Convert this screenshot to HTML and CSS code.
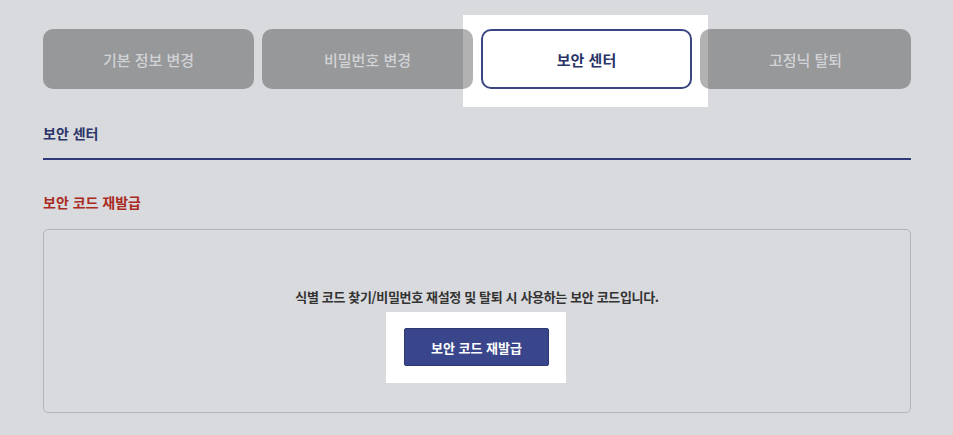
FILE: index.html
```html
<!DOCTYPE html>
<html lang="ko">
<head>
<meta charset="utf-8">
<link rel="stylesheet" href="styles.css">
</head>
<body>
<div class="page">
  <nav class="tabs">
    <a class="tab">기본 정보 변경</a>
    <a class="tab">비밀번호 변경</a>
    <a class="tab active">보안 센터</a>
    <a class="tab">고정닉 탈퇴</a>
  </nav>
  <h2 class="section-title">보안 센터</h2>
  <h3 class="sub-title">보안 코드 재발급</h3>
  <div class="box">
    <p class="desc">식별 코드 찾기/비밀번호 재설정 및 탈퇴 시 사용하는 보안 코드입니다.</p>
    <div class="btn-wrap"><button class="btn">보안 코드 재발급</button></div>
  </div>
</div>
</body>
</html>
```
FILE: styles.css
```css
html, body { margin: 0; padding: 0; }
body {
  background: #d9dadd;
  font-family: "Noto Sans CJK KR", "Noto Sans", sans-serif;
  width: 953px;
  height: 435px;
  overflow: hidden;
}
.page {
  margin-left: 43px;
  width: 868px;
  padding-top: 29px;
}
.tabs {
  display: grid;
  grid-template-columns: repeat(4, 1fr);
  gap: 8px;
  isolation: isolate;
}
.tab {
  height: 60px;
  border-radius: 10px;
  background: rgba(0, 0, 0, 0.3);
  color: #d2d3d6;
  font-size: 15px;
  font-weight: 500;
  display: flex;
  align-items: center;
  justify-content: center;
  box-sizing: border-box;
}
.tab.active {
  position: relative;
  background: #fff;
  border: 2px solid #3a4682;
  color: #2b3468;
  font-weight: 700;
}
.tab.active::before {
  content: "";
  position: absolute;
  left: -20px;
  right: -18px;
  top: -16px;
  bottom: -20px;
  background: #fff;
  z-index: -1;
}
.section-title {
  margin: 0;
  margin-top: 34px;
  font-size: 14px;
  font-weight: 700;
  color: #2b3468;
  line-height: 20px;
  padding-bottom: 15px;
  border-bottom: 2px solid #2f3a78;
}
.sub-title {
  margin: 0;
  margin-top: 32px;
  font-size: 14px;
  font-weight: 700;
  color: #a92a1f;
  line-height: 20px;
}
.box {
  margin-top: 17px;
  height: 184px;
  box-sizing: border-box;
  border: 1px solid #b3b4b8;
  border-radius: 5px;
  display: flex;
  flex-direction: column;
  align-items: center;
  padding-top: 57px;
}
.desc {
  margin: 0;
  font-size: 13px;
  font-weight: 700;
  letter-spacing: -0.35px;
  color: #333;
  line-height: 20px;
}
.btn-wrap {
  margin-top: 5px;
  background: #fff;
  padding: 16px 17px 17px 18px;
  margin-left: -2px;
}
.btn {
  display: block;
  width: 145px;
  height: 38px;
  background: #3a468c;
  border: 1px solid #2d3870;
  border-radius: 2px;
  color: #fff;
  font-family: inherit;
  font-size: 13px;
  font-weight: 700;
  padding: 0;
}
```
